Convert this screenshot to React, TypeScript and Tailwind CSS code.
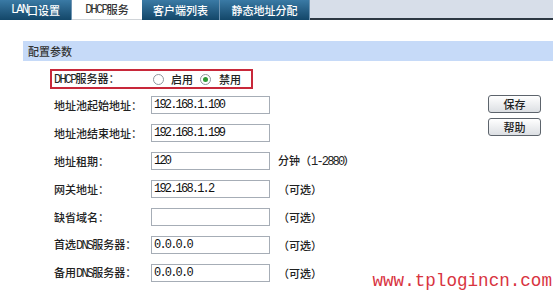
import React from 'react';

const cjk = '"Noto Sans CJK SC", "Liberation Sans", sans-serif';

const Ascii: React.FC<{ children: React.ReactNode }> = ({ children }) => (
  <span className="font-['Liberation_Mono',monospace] text-[12px] tracking-[-1.8px]">{children}</span>
);

const tabs = [
  { label: <><Ascii>LAN</Ascii>口设置</>, w: 'w-[72px]', active: false },
  { label: <><Ascii>DHCP</Ascii>服务</>, w: 'w-[70px]', active: true },
  { label: '客户端列表', w: 'w-[78px]', active: false },
  { label: '静态地址分配', w: 'w-[90px]', active: false },
];

const rows = [
  { label: '地址池起始地址：', value: '192.168.1.100' },
  { label: '地址池结束地址：', value: '192.168.1.199' },
  { label: '地址租期：', value: '120', suffix: <>分钟（<Ascii>1-2880</Ascii>）</> },
  { label: '网关地址：', value: '192.168.1.2', suffix: '（可选）' },
  { label: '缺省域名：', value: '', suffix: '（可选）' },
  { label: <>首选<Ascii>DNS</Ascii>服务器：</>, value: '0.0.0.0', suffix: '（可选）' },
  { label: <>备用<Ascii>DNS</Ascii>服务器：</>, value: '0.0.0.0', suffix: '（可选）' },
];

const Radio: React.FC<{ checked?: boolean }> = ({ checked }) => (
  <span className="flex h-[11px] w-[11px] items-center justify-center rounded-full border border-[#8f969e] bg-white">
    {checked && <span className="h-[5px] w-[5px] rounded-full bg-[#2f9a35]" />}
  </span>
);

const Btn: React.FC<{ children: React.ReactNode }> = ({ children }) => (
  <div className="flex h-[18px] w-[53px] items-center justify-center rounded-[3px] border border-[#5d646c] bg-linear-to-b from-white to-[#dcdfe3] text-[11px] text-[#222]">
    {children}
  </div>
);

export default function App() {
  return (
    <div className="relative h-[292px] w-[553px] overflow-hidden bg-white text-[11px] font-medium text-[#222]" style={{ fontFamily: cjk }}>
      {/* tabs */}
      <div className="flex h-[20px]">
        {tabs.map((t, i) => (
          <div
            key={i}
            className={
              t.active
                ? `${t.w} flex items-center justify-center bg-white text-[#333] border-b border-[#d0d4d8]`
                : `${t.w} flex items-center justify-center border-r border-[#6f95b3] bg-linear-to-b from-[#3a7aa5] to-[#134769] text-white`
            }
          >
            {t.label}
          </div>
        ))}
        <div className="flex-1 border-b-2 border-[#2d3843] bg-[#d7dee9]" />
      </div>

      {/* section header */}
      <div className="ml-[23px] mt-[21px] flex h-[20px] items-center bg-[#c6daf8] pl-[5px] text-[#333]">配置参数</div>

      <div className="flex">
        <div className="ml-[50px] mt-[8px]">
          <div className="flex h-[20px] w-[203px] items-center border-2 border-[#c8283a] pl-[2px]">
            <div className="w-[99px]"><Ascii>DHCP</Ascii>服务器：</div>
            <Radio />
            <span className="ml-[7px] w-[29px]">启用</span>
            <Radio checked />
            <span className="ml-[8px]">禁用</span>
          </div>
          <div className="mt-[2px]">
            {rows.map((r, i) => (
              <div key={i} className="flex h-[28px] items-center pl-[4px]">
                <div className="w-[97px]">{r.label}</div>
                <div className="flex h-[18px] w-[119px] items-center border border-[#a6adb6] bg-white pl-[2px] font-normal text-[#111]">
                  <Ascii>{r.value}</Ascii>
                </div>
                {r.suffix && <div className="ml-[8px]">{r.suffix}</div>}
              </div>
            ))}
          </div>
        </div>

        <div className="ml-auto mr-[12px] mt-[34px] flex flex-col gap-[5px]">
          <Btn>保存</Btn>
          <Btn>帮助</Btn>
        </div>
      </div>

      <div className="absolute bottom-[1px] right-[1px] font-['Liberation_Mono',monospace] text-[17.6px] font-normal leading-none text-[#d8343f]">
        www.tplogincn.com
      </div>
    </div>
  );
}
